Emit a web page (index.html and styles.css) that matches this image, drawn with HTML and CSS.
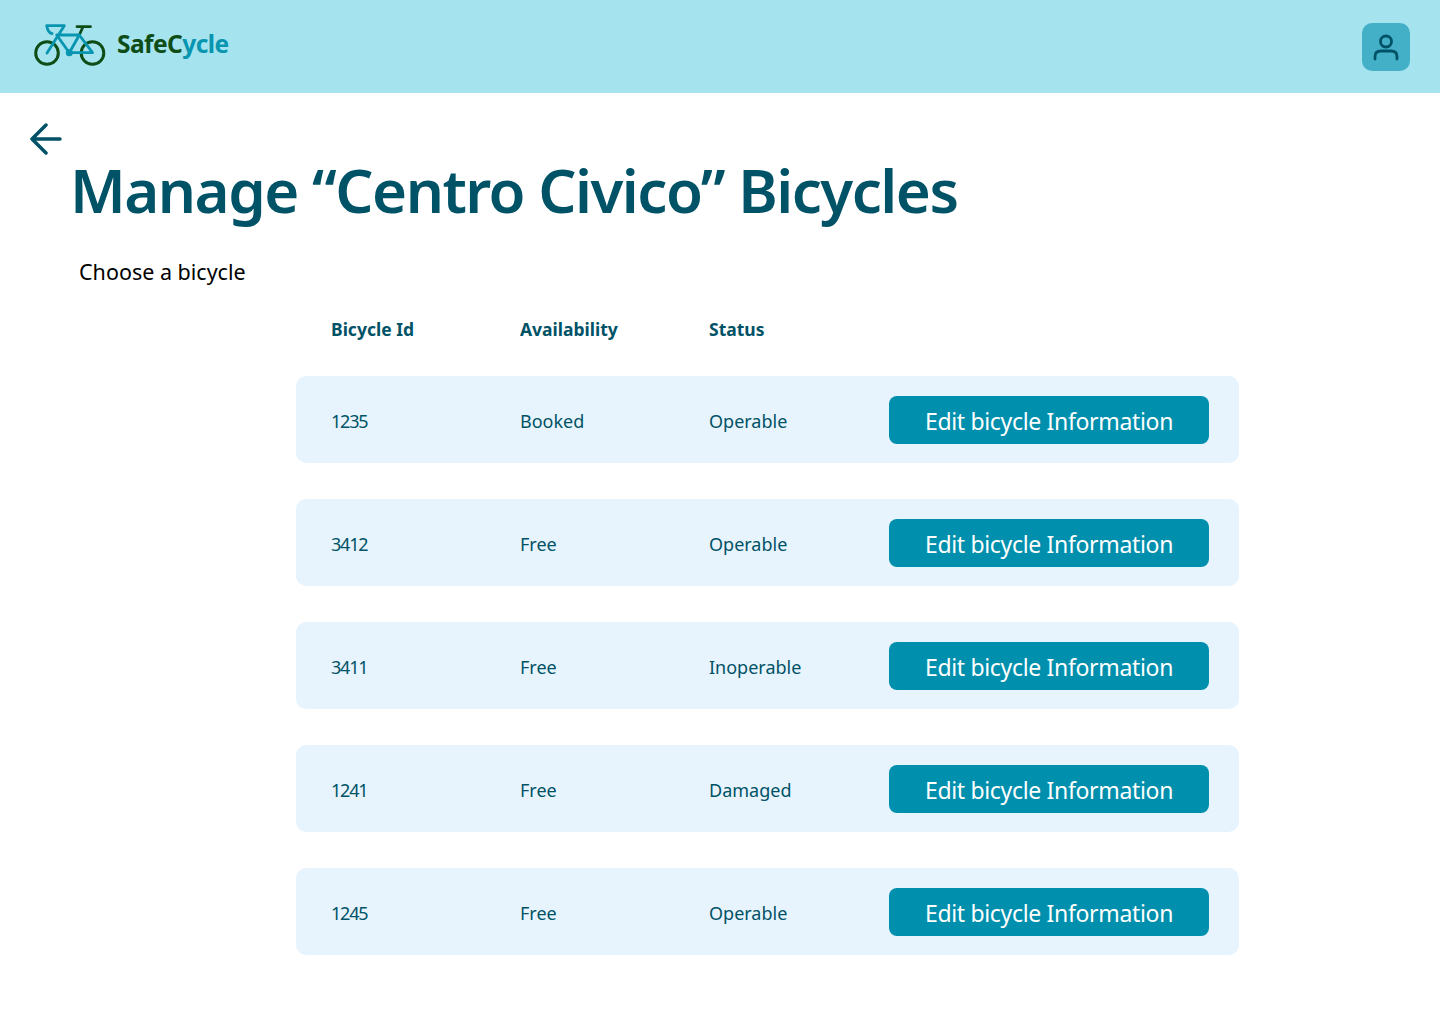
FILE: index.html

```html
<!DOCTYPE html>
<html lang="en">
<head>
    <meta charset="UTF-8">
    <meta name="viewport" content="width=device-width, initial-scale=1.0">
    <title>Manage Bicycles - SafeCycle</title>
    <link rel="stylesheet" href="styles.css">
</head>
<body>
    <header class="topbar">
        <a class="brand" href="#">
            <svg class="brand-icon" width="72" height="44" viewBox="0 0 72 44" fill="none" stroke-linecap="round" stroke-linejoin="round">
                <circle cx="13" cy="31" r="11.300" stroke="#0f4d17" stroke-width="3"/>
                <circle cx="58.500" cy="31" r="11.300" stroke="#0f4d17" stroke-width="3"/>
                <path d="M43 4.700H56.500M49 4.700L45.300 13" stroke="#0f4d17" stroke-width="2.800"/>
                <path d="M18 11.500Q14 11 12.700 3.700H30.300L13 31" stroke="#0895b0" stroke-width="2.800"/>
                <path d="M22.700 13H45.300L35.300 30.700Z" stroke="#0895b0" stroke-width="2.800"/>
                <path d="M35.300 30.700H58.500L45.300 13" stroke="#0895b0" stroke-width="2.800"/>
                <circle cx="35.300" cy="30.700" r="3.500" fill="#0895b0"/>
            </svg>
            <span class="brand-name">SafeC<em>ycle</em></span>
        </a>
        <a class="user-btn" href="#" aria-label="Account">
            <svg width="30" height="30" viewBox="0 0 30 30" fill="none" stroke="#005266" stroke-width="2.800" stroke-linecap="round">
                <circle cx="15" cy="9.500" r="5.500"/>
                <path d="M4 27V24.500Q4 19 10 19H20Q26 19 26 24.500V27"/>
            </svg>
        </a>
    </header>

    <main class="content">
        <a class="back" href="#" aria-label="Back">
            <svg width="32" height="32" viewBox="0 0 32 32" fill="none" stroke="#005266" stroke-width="3.500" stroke-linecap="round" stroke-linejoin="round">
                <path d="M30 16H2.500M16 2L2 16L16 30"/>
            </svg>
        </a>
        <h1>Manage “Centro Civico” Bicycles</h1>
        <p class="lead">Choose a bicycle</p>

        <div class="bikes">
            <div class="cols head">
                <span>Bicycle Id</span>
                <span>Availability</span>
                <span>Status</span>
            </div>
            <div class="cols row">
                <span class="bike-id">1235</span>
                <span>Booked</span>
                <span>Operable</span>
                <button>Edit bicycle Information</button>
            </div>
            <div class="cols row">
                <span class="bike-id">3412</span>
                <span>Free</span>
                <span>Operable</span>
                <button>Edit bicycle Information</button>
            </div>
            <div class="cols row">
                <span class="bike-id">3411</span>
                <span>Free</span>
                <span>Inoperable</span>
                <button>Edit bicycle Information</button>
            </div>
            <div class="cols row">
                <span class="bike-id">1241</span>
                <span>Free</span>
                <span>Damaged</span>
                <button>Edit bicycle Information</button>
            </div>
            <div class="cols row">
                <span class="bike-id">1245</span>
                <span>Free</span>
                <span>Operable</span>
                <button>Edit bicycle Information</button>
            </div>
        </div>
    </main>
</body>
</html>
```

FILE: styles.css

```css
* {
    box-sizing: border-box;
}
body {
    margin: 0;
    font-family: "Noto Sans", Arial, sans-serif;
    background: #fff;
    color: #005266;
}
a {
    text-decoration: none;
}
.topbar {
    height: 93px;
    background: #a5e3ef;
    display: flex;
    align-items: center;
    justify-content: space-between;
    padding: 0 30px 0 34px;
}
.brand {
    display: flex;
    align-items: center;
    gap: 11px;
    margin-bottom: 5px;
}
.brand-name {
    font-size: 24.500px;
    font-weight: 700;
    letter-spacing: -0.55px;
    color: #0f4d17;
    margin-bottom: 2px;
}
.brand-name em {
    font-style: normal;
    color: #0895b0;
}
.user-btn {
    width: 48px;
    height: 48px;
    border-radius: 10px;
    background: #43b0c8;
    display: flex;
    align-items: center;
    justify-content: center;
}
.content {
    padding: 30px 0 0 30px;
}
.back {
    display: block;
    width: 32px;
    height: 32px;
}
h1 {
    margin: 0 0 0 40px;
    font-size: 60px;
    line-height: 70px;
    font-weight: 600;
    letter-spacing: -1.5px;
    color: #005266;
}
.lead {
    margin: 32px 0 0 49px;
    font-size: 21.500px;
    line-height: 30px;
    color: #000;
}
.bikes {
    width: 943px;
    margin: 24px 0 0 266px;
    display: flex;
    flex-direction: column;
    gap: 36px;
}
.cols {
    display: grid;
    grid-template-columns: 189px 189px 180px 320px;
    align-items: center;
    padding: 0 30px 0 35px;
    font-size: 18px;
}
.cols span {
    padding-top: 2px;
}
.head {
    height: 34px;
    margin-bottom: -5px;
    font-size: 17.500px;
    font-weight: 700;
}
.row {
    height: 87px;
    background: #e7f4fe;
    border-radius: 10px;
}
.bike-id {
    letter-spacing: -1.2px;
}
button {
    height: 48px;
    border: none;
    border-radius: 8px;
    background: #0090ad;
    color: #fff;
    font-family: inherit;
    font-size: 23px;
    letter-spacing: -0.33px;
    cursor: pointer;
    padding: 2px 0 0;
}
```
